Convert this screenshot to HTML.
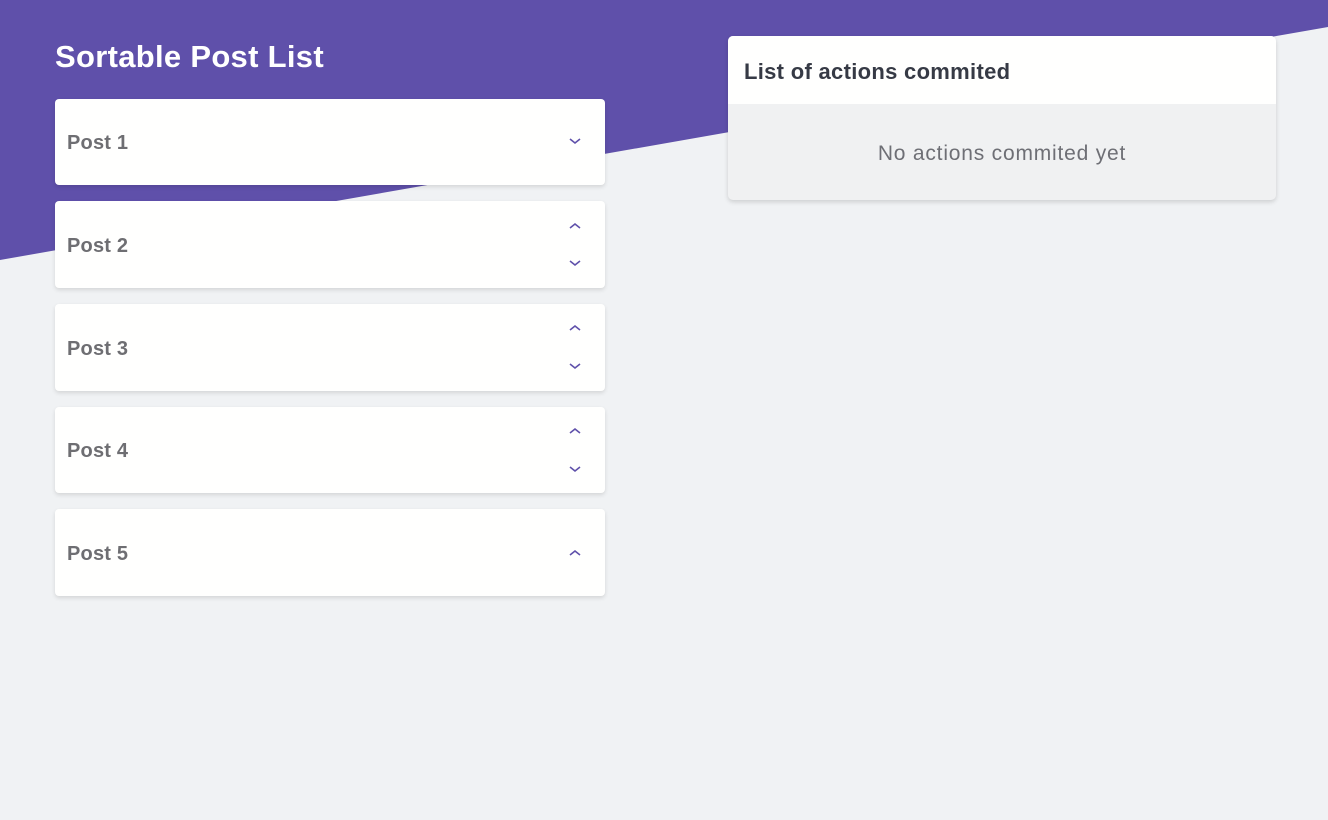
<!DOCTYPE html>
<html><head><style>
*{box-sizing:border-box;margin:0;padding:0}
body{width:1328px;height:820px;background:#f0f2f4;font-family:"Liberation Sans","DejaVu Sans",sans-serif;position:relative;overflow:hidden}
svg.bg{position:absolute;left:0;top:0}
h1{position:absolute;left:55px;top:39px;color:#fff;font-size:31px;font-weight:bold;letter-spacing:0.3px}
.card{position:absolute;left:55px;width:550px;background:#fffffe;border-radius:4px;box-shadow:0 2px 4px rgba(0,0,0,.12)}
.card span{position:absolute;left:12px;top:50%;transform:translateY(-44%);font-size:20px;font-weight:bold;color:#6e6e72;letter-spacing:0.2px}
.card svg{position:absolute;left:513px}
.panel{position:absolute;left:728px;top:36px;width:548px;height:164px;border-radius:5px;box-shadow:0 2px 5px rgba(0,0,0,.15);overflow:hidden;background:#f0f1f2}
.panel .hd{height:68px;background:#fffffe;padding-left:16px;font-size:22px;font-weight:bold;color:#363a45;line-height:72px;letter-spacing:0.3px}
.panel .bd{text-align:center;font-size:21px;color:#6e6f75;line-height:100px;height:96px;letter-spacing:0.8px}
</style></head><body>
<svg class="bg" width="1328" height="820"><polygon points="0,0 1328,0 1328,27 0,260" fill="#5f50aa"/></svg>
<h1>Sortable Post List</h1>
<div class="card" style="top:99px;height:86px"><span>Post 1</span>
<svg style="top:37px" width="14" height="10" viewBox="0 0 14 10"><path d="M2 3l5 4 5-4" fill="none" stroke="#5f50aa" stroke-width="1.6"/></svg></div>
<div class="card" style="top:201px;height:87px"><span>Post 2</span>
<svg style="top:20px" width="14" height="10" viewBox="0 0 14 10"><path d="M2 7l5-4 5 4" fill="none" stroke="#5f50aa" stroke-width="1.6"/></svg>
<svg style="top:57px" width="14" height="10" viewBox="0 0 14 10"><path d="M2 3l5 4 5-4" fill="none" stroke="#5f50aa" stroke-width="1.6"/></svg></div>
<div class="card" style="top:304px;height:87px"><span>Post 3</span>
<svg style="top:19px" width="14" height="10" viewBox="0 0 14 10"><path d="M2 7l5-4 5 4" fill="none" stroke="#5f50aa" stroke-width="1.6"/></svg>
<svg style="top:57px" width="14" height="10" viewBox="0 0 14 10"><path d="M2 3l5 4 5-4" fill="none" stroke="#5f50aa" stroke-width="1.6"/></svg></div>
<div class="card" style="top:407px;height:86px"><span>Post 4</span>
<svg style="top:19px" width="14" height="10" viewBox="0 0 14 10"><path d="M2 7l5-4 5 4" fill="none" stroke="#5f50aa" stroke-width="1.6"/></svg>
<svg style="top:57px" width="14" height="10" viewBox="0 0 14 10"><path d="M2 3l5 4 5-4" fill="none" stroke="#5f50aa" stroke-width="1.6"/></svg></div>
<div class="card" style="top:509px;height:87px"><span>Post 5</span>
<svg style="top:39px" width="14" height="10" viewBox="0 0 14 10"><path d="M2 7l5-4 5 4" fill="none" stroke="#5f50aa" stroke-width="1.6"/></svg></div>
<div class="panel"><div class="hd">List of actions commited</div><div class="bd">No actions commited yet</div></div>
</body></html>
